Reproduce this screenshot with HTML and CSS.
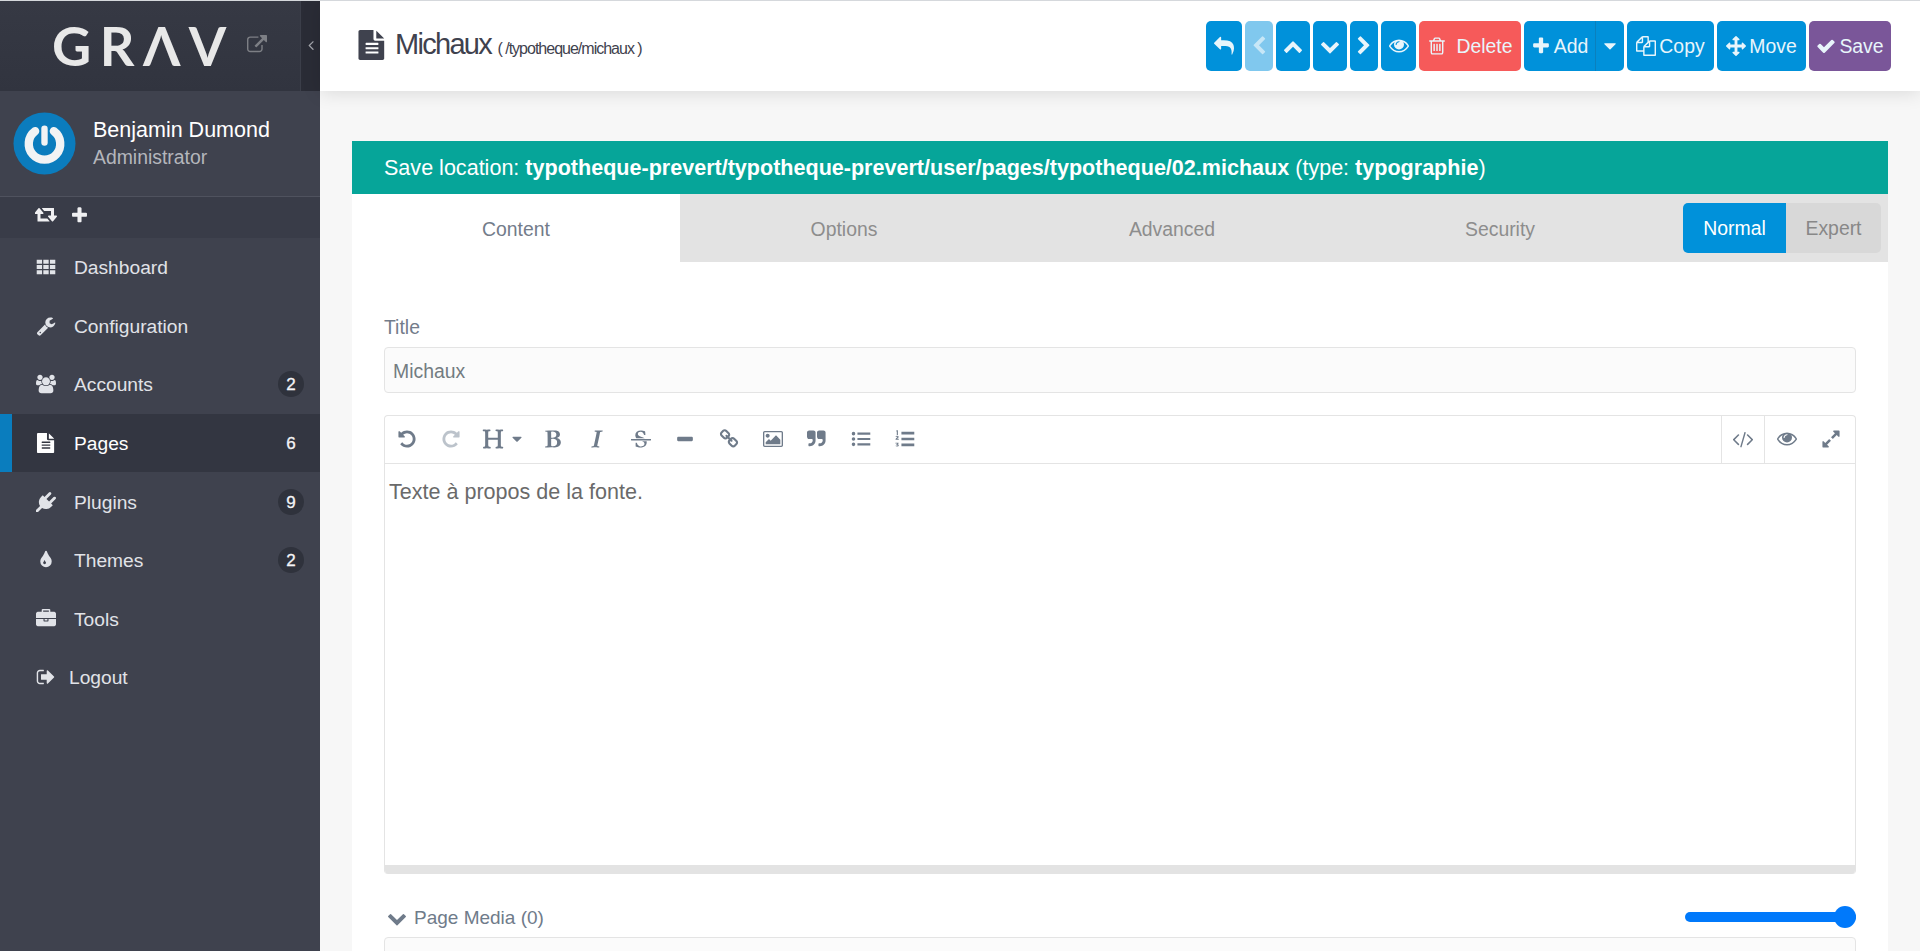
FILE: index.html
```html
<!DOCTYPE html>
<html lang="en">
<head>
    <meta charset="UTF-8">
    <title>Michaux | Grav</title>
    <link rel="stylesheet" href="styles.css">
</head>
<body>
    <!-- icon sprite -->
    <svg class="sprite" xmlns="http://www.w3.org/2000/svg">
        <symbol id="i-external" viewBox="0 0 1792 1792"><path d="M1408 928v320q0 119-84.5 203.5t-203.5 84.5h-832q-119 0-203.5-84.5t-84.5-203.5v-832q0-119 84.5-203.5t203.5-84.5h704q14 0 23 9t9 23v64q0 14-9 23t-23 9h-704q-66 0-113 47t-47 113v832q0 66 47 113t113 47h832q66 0 113-47t47-113v-320q0-14 9-23t23-9h64q14 0 23 9t9 23zm384-864v512q0 26-19 45t-45 19-45-19l-176-176-652 652q-10 10-23 10t-23-10l-114-114q-10-10-10-23t10-23l652-652-176-176q-19-19-19-45t19-45 45-19h512q26 0 45 19t19 45z"/></symbol>
        <symbol id="i-angle-left" viewBox="0 0 1792 1792"><path d="M1203 544q0 13-10 23l-393 393 393 393q10 10 10 23t-10 23l-50 50q-10 10-23 10t-23-10l-466-466q-10-10-10-23t10-23l466-466q10-10 23-10t23 10l50 50q10 10 10 23z"/></symbol>
        <symbol id="i-retweet" viewBox="0 0 1920 1792"><path d="M1152 1376q0 13-9.5 22.5t-22.5 9.5h-960q-8 0-13.5-2t-9-7-5.5-8-3-11.5-1-11.5v-600h-192q-26 0-45-19t-19-45q0-24 15-41l320-384q19-22 49-22t49 22l320 384q15 17 15 41 0 26-19 45t-45 19h-192v384h576q16 0 25 11l160 192q7 9 7 21zm640-416q0 24-15 41l-320 384q-20 23-49 23t-49-23l-320-384q-15-17-15-41 0-26 19-45t45-19h192v-384h-576q-16 0-25-12l-160-192q-7-9-7-20 0-13 9.5-22.5t22.5-9.5h960q8 0 13.5 2t9 7 5.5 8 3 11.5 1 11.5v600h192q26 0 45 19t19 45z" transform="translate(64 0)"/></symbol>
        <symbol id="i-plus" viewBox="0 0 1792 1792"><path d="M1600 736v192q0 40-28 68t-68 28h-416v416q0 40-28 68t-68 28h-192q-40 0-68-28t-28-68v-416h-416q-40 0-68-28t-28-68v-192q0-40 28-68t68-28h416v-416q0-40 28-68t68-28h192q40 0 68 28t28 68v416h416q40 0 68 28t28 68z"/></symbol>
        <symbol id="i-th" viewBox="0 0 1792 1792"><path d="M64 256h480v352h-480zM656 256h480v352h-480zM1248 256h480v352h-480zM64 720h480v352h-480zM656 720h480v352h-480zM1248 720h480v352h-480zM64 1184h480v352h-480zM656 1184h480v352h-480zM1248 1184h480v352h-480z"/></symbol>
        <symbol id="i-wrench" viewBox="0 0 1792 1792"><path d="M448 1472q0-26-19-45t-45-19-45 19-19 45 19 45 45 19 45-19 19-45zm644-420l-682 682q-37 37-90 37-52 0-91-37l-106-108q-38-36-38-90 0-53 38-91l681-681q39 98 114.5 173.5t173.5 114.5zm634-435q0 39-23 106-47 134-164.5 217.5t-258.5 83.5q-185 0-316.5-131.5t-131.5-316.5 131.5-316.5 316.5-131.5q58 0 121.5 16.5t107.5 46.5q16 11 16 28t-16 28l-293 169v224l193 107q5-3 79-48.5t135.5-81 70.5-35.5q15 0 23.5 10t8.5 25z"/></symbol>
        <symbol id="i-users" viewBox="0 0 1920 1792"><path d="M593 896q-162 5-265 128h-134q-82 0-138-40.5t-56-118.5q0-353 124-353 6 0 43.5 21t97.5 42.5 119 21.5q67 0 133-23-5 37-5 66 0 139 81 256zm1071 637q0 120-73 189.5t-194 69.5h-874q-121 0-194-69.5t-73-189.5q0-53 3.5-103.5t14-109 26.5-108.5 43-97.5 62-81 85.5-53.5 111.5-20q10 0 43 21.5t73 48 107 48 135 21.5 135-21.5 107-48 73-48 43-21.5q61 0 111.5 20t85.5 53.5 62 81 43 97.5 26.5 108.5 14 109 3.5 103.5zm-1024-1277q0 106-75 181t-181 75-181-75-75-181 75-181 181-75 181 75 75 181zm704 384q0 159-112.5 271.5t-271.5 112.5-271.5-112.5-112.5-271.5 112.5-271.5 271.5-112.5 271.5 112.5 112.5 271.5zm576 225q0 78-56 118.5t-138 40.5h-134q-103-123-265-128 81-117 81-256 0-29-5-66 66 23 133 23 59 0 119-21.5t97.5-42.5 43.5-21q124 0 124 353zm-128-609q0 106-75 181t-181 75-181-75-75-181 75-181 181-75 181 75 75 181z"/></symbol>
        <symbol id="i-file" viewBox="0 0 1792 1792"><path fill-rule="evenodd" d="M1596 476q14 14 28 36h-472v-472q22 14 36 28zm-476 164h504v1056q0 40-28 68t-68 28h-1344q-40 0-68-28t-28-68v-1600q0-40 28-68t68-28h800v544q0 40 28 68t68 28zm160 736v-64q0-14-9-23t-23-9h-704q-14 0-23 9t-9 23v64q0 14 9 23t23 9h704q14 0 23-9t9-23zm0-256v-64q0-14-9-23t-23-9h-704q-14 0-23 9t-9 23v64q0 14 9 23t23 9h704q14 0 23-9t9-23zm0-256v-64q0-14-9-23t-23-9h-704q-14 0-23 9t-9 23v64q0 14 9 23t23 9h704q14 0 23-9t9-23z"/></symbol>
        <symbol id="i-plug" viewBox="0 0 1792 1792"><path d="M1755 453q37 38 37 90.5t-37 90.5l-401 400 150 150-160 160q-163 163-389.5 186.5t-411.5-100.5l-362 362h-181v-181l362-362q-124-185-100.5-411.5t186.5-389.5l160-160 150 150 400-401q38-37 91-37t90 37 37 90.5-37 90.5l-400 401 234 234 401-400q38-37 91-37t90 37z"/></symbol>
        <symbol id="i-tint" viewBox="0 0 1792 1792"><path fill-rule="evenodd" d="M896 1152q0-36-20-69-1-1-15.5-22.5t-25.5-38-25-44-21-50.5q-4-16-21-16t-21 16q-7 23-21 50.5t-25 44-25.5 38-15.5 22.5q-20 33-20 69 0 53 37.5 90.5t90.5 37.5 90.5-37.5 37.5-90.5zm512-128q0 212-150 362t-362 150-362-150-150-362q0-145 81-275 6-9 62.5-90.5t101-151 99.5-178 83-201.5q9-30 34-47t51-17 51.5 17 33.5 47q28 93 83 201.5t99.5 178 101 151 62.5 90.5q81 127 81 275z"/></symbol>
        <symbol id="i-briefcase" viewBox="0 0 1792 1792"><path fill-rule="evenodd" d="M640 256h512v-128h-512v128zm1152 640v480q0 66-47 113t-113 47h-1472q-66 0-113-47t-47-113v-480h672v160q0 26 19 45t45 19h320q26 0 45-19t19-45v-160h672zm-768 0v128h-256v-128h256zm768-480v384h-1792v-384q0-66 47-113t113-47h352v-160q0-40 28-68t68-28h576q40 0 68 28t28 68v160h352q66 0 113 47t47 113z"/></symbol>
        <symbol id="i-signout" viewBox="0 0 1792 1792"><path d="M704 1440q0 4 1 20t.5 26.5-3 23.5-10 19.5-20.5 6.5h-320q-119 0-203.5-84.5t-84.5-203.5v-704q0-119 84.5-203.5t203.5-84.5h320q13 0 22.5 9.5t9.5 22.5q0 4 1 20t.5 26.5-3 23.5-10 19.5-20.5 6.5h-320q-66 0-113 47t-47 113v704q0 66 47 113t113 47h312l11.5 1 11.5 3 8 5.5 7 9 2 13.5zm928-544q0 26-19 45l-544 544q-19 19-45 19t-45-19-19-45v-288h-448q-26 0-45-19t-19-45v-384q0-26 19-45t45-19h448v-288q0-26 19-45t45-19 45 19l544 544q19 19 19 45z"/></symbol>
        <symbol id="i-reply" viewBox="0 0 1792 1792"><path d="M1792 1120q0 166-127 451-3 7-10.5 24t-13.5 30-13 22q-12 17-28 17-15 0-23.5-10t-8.5-25q0-9 2.5-26.5t2.5-23.5q5-68 5-123 0-101-17.5-181t-48.5-138.5-80-101-105.5-69.5-133-42.5-154-21.5-175.5-6h-224v256q0 26-19 45t-45 19-45-19l-512-512q-19-19-19-45t19-45l512-512q19-19 45-19t45 19 19 45v256h224q713 0 875 403 53 134 53 333z"/></symbol>
        <symbol id="i-chev-left" viewBox="0 0 1792 1792"><path d="M1427 301l-531 531 531 531q19 19 19 45t-19 45l-166 166q-19 19-45 19t-45-19l-742-742q-19-19-19-45t19-45l742-742q19-19 45-19t45 19l166 166q19 19 19 45t-19 45z"/></symbol>
        <symbol id="i-chev-right" viewBox="0 0 1792 1792"><path d="M1363 877l-742 742q-19 19-45 19t-45-19l-166-166q-19-19-19-45t19-45l531-531-531-531q-19-19-19-45t19-45l166-166q19-19 45-19t45 19l742 742q19 19 19 45t-19 45z"/></symbol>
        <symbol id="i-chev-up" viewBox="0 0 1792 1792"><path d="M1683 1331l-166 165q-19 19-45 19t-45-19l-531-531-531 531q-19 19-45 19t-45-19l-166-165q-19-19-19-45.5t19-45.5l742-741q19-19 45-19t45 19l742 741q19 19 19 45.5t-19 45.5z"/></symbol>
        <symbol id="i-chev-down" viewBox="0 0 1792 1792"><path d="M1683 808l-742 741q-19 19-45 19t-45-19l-742-741q-19-19-19-45.5t19-45.5l166-165q19-19 45-19t45 19l531 531 531-531q19-19 45-19t45 19l166 165q19 19 19 45.5t-19 45.5z"/></symbol>
        <symbol id="i-eye" viewBox="0 0 1792 1792"><path fill-rule="evenodd" d="M1664 960q-152-236-381-353 61 104 61 225 0 185-131.5 316.5t-316.5 131.5-316.5-131.5-131.5-316.5q0-121 61-225-229 117-381 353 133 205 333.5 326.5t434.5 121.5 434.5-121.5 333.5-326.5zm-720-384q0-20-14-34t-34-14q-125 0-214.5 89.5t-89.5 214.5q0 20 14 34t34 14 34-14 14-34q0-86 61-147t147-61q20 0 34-14t14-34zm848 384q0 34-20 69-140 230-376.5 368.5t-499.5 138.5-499.5-139-376.5-368q-20-35-20-69t20-69q140-229 376.5-368t499.5-139 499.5 139 376.5 368q20 35 20 69z" transform="translate(0 -64)"/></symbol>
        <symbol id="i-trash" viewBox="0 0 1792 1792"><path d="M704 736v576q0 14-9 23t-23 9h-64q-14 0-23-9t-9-23v-576q0-14 9-23t23-9h64q14 0 23 9t9 23zm256 0v576q0 14-9 23t-23 9h-64q-14 0-23-9t-9-23v-576q0-14 9-23t23-9h64q14 0 23 9t9 23zm256 0v576q0 14-9 23t-23 9h-64q-14 0-23-9t-9-23v-576q0-14 9-23t23-9h64q14 0 23 9t9 23zm128 724v-948h-896v948q0 22 7 40.5t14.5 27 10.5 8.5h832q3 0 10.5-8.5t14.5-27 7-40.5zm-672-1076h448l-48-117q-7-9-17-11h-317q-10 2-17 11zm928 32v64q0 14-9 23t-23 9h-96v948q0 83-47 143.5t-113 60.5h-832q-66 0-113-58.5t-47-141.5v-952h-96q-14 0-23-9t-9-23v-64q0-14 9-23t23-9h309l70-167q15-37 54-63t79-26h320q40 0 79 26t54 63l70 167h309q14 0 23 9t9 23z"/></symbol>
        <symbol id="i-caret" viewBox="0 0 1792 1792"><path d="M1408 704q0 26-19 45l-448 448q-19 19-45 19t-45-19l-448-448q-19-19-19-45t19-45 45-19h896q26 0 45 19t19 45z"/></symbol>
        <symbol id="i-files" viewBox="0 0 1792 1792"><path d="M1696 384q40 0 68 28t28 68v1216q0 40-28 68t-68 28h-960q-40 0-68-28t-28-68v-288h-544q-40 0-68-28t-28-68v-672q0-40 20-88t48-76l408-408q28-28 76-48t88-20h416q40 0 68 28t28 68v328q68-40 128-40h416zm-544 213l-299 299h299v-299zm-640-384l-299 299h299v-299zm196 647l316-316v-416h-384v416q0 40-28 68t-68 28h-416v640h512v-256q0-40 20-88t48-76zm956 804v-1152h-384v416q0 40-28 68t-68 28h-416v640h896z"/></symbol>
        <symbol id="i-arrows" viewBox="0 0 1792 1792"><path d="M1792 896q0 26-19 45l-256 256q-19 19-45 19t-45-19-19-45v-128h-384v384h128q26 0 45 19t19 45-19 45l-256 256q-19 19-45 19t-45-19l-256-256q-19-19-19-45t19-45 45-19h128v-384h-384v128q0 26-19 45t-45 19-45-19l-256-256q-19-19-19-45t19-45l256-256q19-19 45-19t45 19 19 45v128h384v-384h-128q-26 0-45-19t-19-45 19-45l256-256q19-19 45-19t45 19l256 256q19 19 19 45t-19 45-45 19h-128v384h384v-128q0-26 19-45t45-19 45 19l256 256q19 19 19 45z"/></symbol>
        <symbol id="i-check" viewBox="0 0 1792 1792"><path d="M1671 566q0 40-28 68l-724 724-136 136q-28 28-68 28t-68-28l-136-136-362-362q-28-28-28-68t28-68l136-136q28-28 68-28t68 28l294 295 656-657q28-28 68-28t68 28l136 136q28 28 28 68z"/></symbol>
        <symbol id="i-undo" viewBox="0 0 1792 1792"><path d="M1664 896q0 156-61 298t-164 245-245 164-298 61q-172 0-327-72.5t-264-204.5q-7-10-6.5-22.5t8.5-20.5l137-138q10-9 25-9 16 2 23 12 73 95 179 147t225 52q104 0 198.5-40.5t163.5-109.5 109.5-163.5 40.5-198.5-40.5-198.5-109.5-163.5-163.5-109.5-198.5-40.5q-98 0-188 35.5t-160 101.5l137 138q31 30 14 69-17 40-59 40h-448q-26 0-45-19t-19-45v-448q0-42 40-59 39-17 69 14l130 129q107-101 244.5-156.5t284.5-55.5q156 0 298 61t245 164 164 245 61 298z"/></symbol>
        <symbol id="i-repeat" viewBox="0 0 1792 1792"><path d="M1664 256v448q0 26-19 45t-45 19h-448q-42 0-59-40-17-39 14-69l138-138q-148-137-349-137-104 0-198.5 40.5t-163.5 109.5-109.5 163.5-40.5 198.5 40.5 198.5 109.5 163.5 163.5 109.5 198.5 40.5q119 0 225-52t179-147q7-10 23-12 15 0 25 9l137 138q9 8 9.5 20.5t-7.5 22.5q-109 132-264 204.5t-327 72.5q-156 0-298-61t-245-164-164-245-61-298 61-298 164-245 245-164 298-61q147 0 284.5 55.5t244.5 156.5l130-129q29-31 70-14 39 17 39 59z"/></symbol>
        <symbol id="i-header" viewBox="0 0 1792 1792"><path d="M1682 1664q-44 0-132.5-3.5t-133.5-3.5q-44 0-132 3.5t-132 3.5q-24 0-37-20.5t-13-45.5q0-31 17-46t39-17 51-7 45-15q33-21 33-140l-1-391q0-21-1-31-13-4-50-4h-675q-38 0-51 4-1 10-1 31l-1 371q0 142 37 164 16 10 48 13t57 3.5 45 15 20 45.5q0 26-12.5 48t-36.5 22q-47 0-139.5-3.5t-138.5-3.5q-43 0-128 3.5t-127 3.5q-23 0-35.5-21t-12.5-45q0-30 15.5-45t36-17.5 47.5-7.5 42-15q33-23 33-143l-1-57v-813q0-3 .5-26t0-36.5-1.5-38.5-3.5-42-6.5-36.5-11-31.5-16-18q-15-10-45-12t-53-2-41-14-18-45q0-26 12-48t36-22q46 0 138.5 3.5t138.5 3.5q42 0 126.5-3.5t126.5-3.5q25 0 37.5 22t12.5 48q0 30-17 43.5t-38.5 14.5-49.5 4-43 13q-35 21-35 160l1 320q0 21 1 32 13 3 39 3h699q25 0 38-3 1-11 1-32l1-320q0-139-35-160-18-11-58.5-12.5t-66-13-25.5-49.5q0-26 12.5-48t37.5-22q44 0 132 3.5t132 3.5q43 0 129-3.5t129-3.5q25 0 37.5 22t12.5 48q0 30-17.5 44t-40 14.5-51.5 3-44 12.5q-35 23-35 161l1 943q0 119 34 140 16 10 46 13.5t53.5 4.5 41.5 15.5 18 44.5q0 26-12 48t-36 22z"/></symbol>
        <symbol id="i-bold" viewBox="0 0 1792 1792"><path fill-rule="evenodd" d="M747 1521q74 32 140 32 376 0 376-335 0-114-41-180-27-44-61.5-74t-67.5-46.5-80.5-25-84-10.5-94.5-2q-73 0-101 10 0 53-.5 159t-.5 158q0 8-1 67.5t-.5 96.5 4.5 83.5 12 66.5zm-14-746q42 7 109 7 82 0 143-13t110-44.5 74.5-89.5 25.5-142q0-70-29-122.5t-79-82-108-43.5-124-14q-50 0-130 13 0 50 4 151t4 152q0 27-.5 80t-.5 79q0 46 1 69zm-541 889l2-94q15-4 85-16t106-27q7-12 12.5-27t8.5-33.5 5.5-32.5 3-37.5.5-34v-35.5-30q0-982-22-1025-4-8-22-14.5t-44.5-11-49.5-7-48.5-4.5-30.5-3l-4-83q98-2 340-11.5t373-9.5q23 0 68 .5t68 .5q70 0 136.5 13t128.5 42 108 71 74 104.5 28 137.5q0 52-16.5 95.5t-39 72-64.5 57.5-73 45-84 40q154 35 256.5 134t102.5 248q0 100-35 179.5t-93.5 130.5-138 85.5-163.5 48.5-176 14q-44 0-132-3t-132-3q-106 0-307 11t-231 12z"/></symbol>
        <symbol id="i-italic" viewBox="0 0 1792 1792"><path d="M384 1662l17-85q6-2 81.5-21.5t111.5-37.5q28-35 41-101 1-7 62-289t114-543.5 52-296.5v-25q-24-13-54.5-18.5t-69.5-8-58-5.5l19-103q33 2 120 6.5t149.5 7 120.5 2.5q48 0 98.5-2.5t121-7 98.5-6.5q-5 39-19 89-30 10-101.5 28.5t-108.5 33.5q-8 19-14 42.5t-9 40-7.5 45.5-6.5 42q-27 148-87.5 419.5t-77.5 355.5q-2 9-13 58t-20 90-16 83.5-6 57.5l1 18q17 4 185 31-3 44-16 99-11 0-32.5 1.5t-32.5 1.5q-29 0-87-10t-86-10q-138-2-206-2-51 0-143 9t-121 11z"/></symbol>
        <symbol id="i-strike" viewBox="0 0 1792 1792"><path d="M1760 896q14 0 23 9t9 23v64q0 14-9 23t-23 9h-1728q-14 0-23-9t-9-23v-64q0-14 9-23t23-9h1728zm-1277-64q-28-35-51-80-48-98-48-188 0-181 134-309 133-127 393-127 50 0 167 19 66 12 177 48 10 38 21 118 14 123 14 183 0 18-5 45l-12 3-84-6-14-2q-50-149-103-205-88-91-210-91-114 0-182 59-67 58-67 146 0 73 66 140t279 129q69 20 173 66 58 28 95 52h-743zm507 256h411q7 39 7 92 0 111-41 212-23 56-71 104-37 35-109 81-80 48-153 66-80 21-203 21-114 0-195-23l-140-40q-57-16-72-28-8-8-8-22v-13q0-108-2-156-1-30 0-68l2-37v-44l102-2q15 34 30 71t22.5 56 12.5 27q35 57 80 94 43 36 105 57 59 22 132 22 64 0 139-27 77-26 122-86 47-61 47-129 0-84-81-157-34-29-137-71z"/></symbol>
        <symbol id="i-minus" viewBox="0 0 1792 1792"><path d="M288 704h1216q96 0 96 96v192q0 96-96 96h-1216q-96 0-96-96v-192q0-96 96-96z"/></symbol>
        <symbol id="i-link" viewBox="0 0 1792 1792"><path fill-rule="evenodd" d="M1520 1216q0-40-28-68l-208-208q-28-28-68-28-42 0-72 32 3 3 19 18.5t21.5 21.5 15 19 13 25.5 3.5 27.5q0 40-28 68t-68 28q-15 0-27.5-3.5t-25.5-13-19-15-21.5-21.5-18.5-19q-33 31-33 73 0 40 28 68l206 207q27 27 68 27 40 0 68-26l147-146q28-28 28-67zm-703-705q0-40-28-68l-206-207q-28-28-68-28-39 0-68 27l-147 146q-28 28-28 67 0 40 28 68l208 208q27 27 68 27 42 0 72-31-3-3-19-18.5t-21.5-21.5-15-19-13-25.5-3.5-27.5q0-40 28-68t68-28q15 0 27.5 3.5t25.5 13 19 15 21.5 21.5 18.5 19q33-31 33-73zm895 705q0 120-85 203l-147 146q-83 83-203 83-121 0-204-85l-206-207q-83-83-83-203 0-123 88-209l-88-88q-86 88-208 88-120 0-204-84l-208-208q-84-84-84-204t85-203l147-146q83-83 203-83 121 0 204 85l206 207q83 83 83 203 0 123-88 209l88 88q86-88 208-88 120 0 204 84l208 208q84 84 84 204z"/></symbol>
        <symbol id="i-image" viewBox="0 0 1920 1792"><path fill-rule="evenodd" d="M576 576q0 80-56 136t-136 56-136-56-56-136 56-136 136-56 136 56 56 136zm1024 384v448h-1408v-192l320-320 160 160 512-512zm96-704h-1600q-13 0-22.5 9.5t-9.5 22.5v1216q0 13 9.5 22.5t22.5 9.5h1600q13 0 22.5-9.5t9.5-22.5v-1216q0-13-9.5-22.5t-22.5-9.5zm160 32v1216q0 66-47 113t-113 47h-1600q-66 0-113-47t-47-113v-1216q0-66 47-113t113-47h1600q66 0 113 47t47 113z" transform="translate(64 0)"/></symbol>
        <symbol id="i-quote" viewBox="0 0 1792 1792"><path d="M768 320v704q0 104-40.5 198.5t-109.5 163.5-163.5 109.5-198.5 40.5h-64q-26 0-45-19t-19-45v-128q0-26 19-45t45-19h64q106 0 181-75t75-181v-32q0-40-28-68t-68-28h-224q-80 0-136-56t-56-136v-384q0-80 56-136t136-56h384q80 0 136 56t56 136zm896 0v704q0 104-40.5 198.5t-109.5 163.5-163.5 109.5-198.5 40.5h-64q-26 0-45-19t-19-45v-128q0-26 19-45t45-19h64q106 0 181-75t75-181v-32q0-40-28-68t-68-28h-224q-80 0-136-56t-56-136v-384q0-80 56-136t136-56h384q80 0 136 56t56 136z"/></symbol>
        <symbol id="i-list-ul" viewBox="0 0 1792 1792"><path d="M64 416a160 160 0 1 0 320 0a160 160 0 1 0-320 0zM64 896a160 160 0 1 0 320 0a160 160 0 1 0-320 0zM64 1376a160 160 0 1 0 320 0a160 160 0 1 0-320 0zM576 320h1152v192h-1152zM576 800h1152v192h-1152zM576 1280h1152v192h-1152z"/></symbol>
        <symbol id="i-list-ol" viewBox="0 0 1792 1792"><path d="M576 256h1152v240h-1152zM576 776h1152v240h-1152zM576 1296h1152v240h-1152zM130 120h130v420h-100v-320h-40zM40 690q20-80 150-80 140 0 140 100 0 70-140 170h150v80h-300q0-100 150-210 40-30 30-50-10-20-80-10-10 20-100 0zM40 1230h280v70l-100 70q120 10 120 100 0 100-150 100-130 0-150-70l90-30q10 20 60 20 50 0 50-30 0-30-110-30v-70l80-50h-170z"/></symbol>
        <symbol id="i-code" viewBox="0 0 1792 1792"><path d="M553 1399l-50 50q-10 10-23 10t-23-10l-466-466q-10-10-10-23t10-23l466-466q10-10 23-10t23 10l50 50q10 10 10 23t-10 23l-393 393 393 393q10 10 10 23t-10 23zm591-1067l-373 1291q-4 13-15.5 19.5t-23.5 2.5l-62-17q-13-4-19.5-15.5t-2.5-24.5l373-1291q4-13 15.5-19.5t23.5-2.5l62 17q13 4 19.5 15.5t2.5 24.5zm657 651l-466 466q-10 10-23 10t-23-10l-50-50q-10-10-10-23t10-23l393-393-393-393q-10-10-10-23t10-23l50-50q10-10 23-10t23 10l466 466q10 10 10 23t-10 23z"/></symbol>
        <symbol id="i-expand" viewBox="0 0 1792 1792"><path d="M883 1056q0 13-10 23l-332 332 144 144q19 19 19 45t-19 45-45 19h-448q-26 0-45-19t-19-45v-448q0-26 19-45t45-19 45 19l144 144 332-332q10-10 23-10t23 10l114 114q10 10 10 23zm781-864v448q0 26-19 45t-45 19-45-19l-144-144-332 332q-10 10-23 10t-23-10l-114-114q-10-10-10-23t10-23l332-332-144-144q-19-19-19-45t19-45 45-19h448q26 0 45 19t19 45z"/></symbol>
    </svg>

    <div class="app">
        <aside class="sidebar">
            <div class="logo-bar">
                <a class="logo" aria-label="Grav">GRΛV</a>
                <svg class="icon logo-link"><use href="#i-external"/></svg>
                <div class="collapse-strip"><svg class="icon"><use href="#i-angle-left"/></svg></div>
            </div>

            <div class="user-block">
                <svg class="avatar" viewBox="0 0 64 64">
                    <circle cx="32" cy="32" r="31.5" fill="#0b7cbd"/>
                    <path d="M22.5 19.5a16 16 0 1 0 19 0" fill="none" stroke="#f2f3f4" stroke-width="8.5" stroke-linecap="round"/>
                    <path d="M32 17v14" fill="none" stroke="#f2f3f4" stroke-width="6.5" stroke-linecap="round"/>
                </svg>
                <div class="user-info">
                    <div class="user-name">Benjamin Dumond</div>
                    <div class="user-role">Administrator</div>
                </div>
            </div>

            <div class="switch-strip">
                <svg class="icon strip-retweet"><use href="#i-retweet"/></svg>
                <svg class="icon strip-plus"><use href="#i-plus"/></svg>
            </div>

            <ul class="nav">
                <li class="nav-item"><svg class="icon"><use href="#i-th"/></svg><span class="nav-label">Dashboard</span></li>
                <li class="nav-item"><svg class="icon"><use href="#i-wrench"/></svg><span class="nav-label">Configuration</span></li>
                <li class="nav-item"><svg class="icon"><use href="#i-users"/></svg><span class="nav-label">Accounts</span><span class="badge">2</span></li>
                <li class="nav-item active"><svg class="icon"><use href="#i-file"/></svg><span class="nav-label">Pages</span><span class="badge">6</span></li>
                <li class="nav-item"><svg class="icon"><use href="#i-plug"/></svg><span class="nav-label">Plugins</span><span class="badge">9</span></li>
                <li class="nav-item"><svg class="icon"><use href="#i-tint"/></svg><span class="nav-label">Themes</span><span class="badge">2</span></li>
                <li class="nav-item"><svg class="icon"><use href="#i-briefcase"/></svg><span class="nav-label">Tools</span></li>
                <li class="nav-item logout"><svg class="icon"><use href="#i-signout"/></svg><span class="nav-label">Logout</span></li>
            </ul>
        </aside>

        <main class="main">
            <header class="titlebar">
                <svg class="icon title-icon"><use href="#i-file"/></svg>
                <h1 class="page-title">Michaux <small class="page-route">( /typotheque/michaux )</small></h1>
                <div class="actions">
                    <a class="btn w-36"><svg class="icon"><use href="#i-reply"/></svg></a>
                    <a class="btn w-28 disabled"><svg class="icon"><use href="#i-chev-left"/></svg></a>
                    <a class="btn w-34"><svg class="icon"><use href="#i-chev-up"/></svg></a>
                    <a class="btn w-34"><svg class="icon"><use href="#i-chev-down"/></svg></a>
                    <a class="btn w-28"><svg class="icon"><use href="#i-chev-right"/></svg></a>
                    <a class="btn w-35"><svg class="icon"><use href="#i-eye"/></svg></a>
                    <a class="btn btn-text delete w-102"><svg class="icon"><use href="#i-trash"/></svg><span class="delete-label">Delete</span></a>
                    <div class="btn-group">
                        <a class="btn btn-text w-72"><svg class="icon"><use href="#i-plus"/></svg>Add</a>
                        <a class="btn dropdown w-28"><svg class="icon"><use href="#i-caret"/></svg></a>
                    </div>
                    <a class="btn btn-text w-87"><svg class="icon"><use href="#i-files"/></svg>Copy</a>
                    <a class="btn btn-text w-89"><svg class="icon"><use href="#i-arrows"/></svg>Move</a>
                    <a class="btn btn-text save w-82"><svg class="icon"><use href="#i-check"/></svg>Save</a>
                </div>
            </header>

            <section class="content">
                <div class="card">
                    <div class="save-location">Save location: <b>typotheque-prevert/typotheque-prevert/user/pages/typotheque/02.michaux</b> (type: <b>typographie</b>)</div>

                    <div class="tabs">
                        <div class="tab active">Content</div>
                        <div class="tab">Options</div>
                        <div class="tab">Advanced</div>
                        <div class="tab">Security</div>
                        <div class="mode-switch">
                            <span class="mode on">Normal</span>
                            <span class="mode">Expert</span>
                        </div>
                    </div>

                    <div class="form">
                        <label class="field-label">Title</label>
                        <div class="text-input">Michaux</div>

                        <div class="editor">
                            <div class="editor-toolbar">
                                <div class="tool-group">
                                    <span class="tool"><svg class="icon"><use href="#i-undo"/></svg></span>
                                    <span class="tool muted"><svg class="icon"><use href="#i-repeat"/></svg></span>
                                    <span class="tool tool-heading"><svg class="icon tool-h"><use href="#i-header"/></svg><svg class="icon tool-caret"><use href="#i-caret"/></svg></span>
                                    <span class="tool"><svg class="icon"><use href="#i-bold"/></svg></span>
                                    <span class="tool"><svg class="icon"><use href="#i-italic"/></svg></span>
                                    <span class="tool"><svg class="icon"><use href="#i-strike"/></svg></span>
                                    <span class="tool"><svg class="icon"><use href="#i-minus"/></svg></span>
                                    <span class="tool"><svg class="icon"><use href="#i-link"/></svg></span>
                                    <span class="tool"><svg class="icon"><use href="#i-image"/></svg></span>
                                    <span class="tool"><svg class="icon"><use href="#i-quote"/></svg></span>
                                    <span class="tool"><svg class="icon"><use href="#i-list-ul"/></svg></span>
                                    <span class="tool"><svg class="icon"><use href="#i-list-ol"/></svg></span>
                                </div>
                                <div class="tool-group right">
                                    <span class="tool mode-tool"><svg class="icon"><use href="#i-code"/></svg></span>
                                    <span class="tool"><svg class="icon"><use href="#i-eye"/></svg></span>
                                    <span class="tool"><svg class="icon"><use href="#i-expand"/></svg></span>
                                </div>
                            </div>
                            <div class="editor-body">Texte à propos de la fonte.</div>
                            <div class="editor-resize"></div>
                        </div>

                        <div class="media-head">
                            <svg class="icon"><use href="#i-chev-down"/></svg>
                            <span class="media-title">Page Media (0)</span>
                            <div class="slider"><span class="slider-thumb"></span></div>
                        </div>
                        <div class="media-box"></div>
                    </div>
                </div>
            </section>
        </main>
    </div>
</body>
</html>
```

FILE: styles.css
```css
* {
    box-sizing: border-box;
}
html, body {
    height: 100%;
}
body {
    margin: 0;
    overflow: hidden;
    background: #f7f7f7;
    border-top: 1px solid #d5d8dc;
    font-family: "Liberation Sans", Arial, sans-serif;
    color: #737c81;
}
.sprite {
    display: none;
}
.icon {
    width: 18px;
    height: 18px;
    fill: currentColor;
    flex: none;
}
.app {
    display: flex;
    height: 950px;
    overflow: hidden;
}

/* sidebar */
.sidebar {
    width: 320px;
    flex: none;
    background: #3f424e;
    color: #e1e3e8;
    overflow: hidden;
}
.logo-bar {
    display: flex;
    align-items: center;
    height: 90px;
    padding-left: 52px;
    background: linear-gradient(#363944, #31343f);
}
.logo {
    font-family: "Lato", sans-serif;
    font-size: 54px;
    font-weight: 700;
    line-height: 90px;
    letter-spacing: 8.5px;
    color: #e8e8e8;
}
.logo-link {
    width: 20px;
    height: 20px;
    margin: -3px 0 0 12px;
    color: #7d7f85;
}
.collapse-strip {
    display: flex;
    align-items: center;
    justify-content: center;
    width: 20px;
    height: 90px;
    margin-left: auto;
    background: #2a2c36;
    border-left: 1px solid #3b3e49;
    color: #a5a7ad;
}
.collapse-strip .icon {
    width: 16px;
    height: 16px;
    margin-top: -2px;
}
.user-block {
    display: flex;
    align-items: center;
    height: 106px;
    padding: 0 0 0 13px;
    border-bottom: 1px solid #4f525e;
}
.avatar {
    width: 63px;
    height: 63px;
    flex: none;
    margin-top: -1px;
}
.user-info {
    margin: 0 0 0 17px;
}
.user-name {
    font-size: 21.5px;
    line-height: 27px;
    color: #fff;
}
.user-role {
    font-size: 19.4px;
    line-height: 27px;
    color: #b4b6bc;
}
.switch-strip {
    display: flex;
    align-items: center;
    height: 41px;
    padding: 0 0 5px 35px;
    background: #393c48;
    color: #f0f0f2;
}
.strip-retweet {
    width: 23px;
    height: 21px;
    margin-right: 12px;
}
.strip-plus {
    width: 19px;
    height: 19px;
}
.nav {
    list-style: none;
    margin: 0;
    padding: 0;
}
.nav-item {
    display: flex;
    align-items: center;
    height: 58.6px;
    padding: 0 16px 0 36px;
    font-size: 19.2px;
}
.nav-item .icon {
    width: 20px;
    height: 20px;
}
.nav-label {
    margin-left: 18px;
    padding-top: 2px;
}
.nav-item.active {
    background: #333641;
    border-left: 12px solid #0a7dbe;
    padding-left: 24px;
    color: #fff;
}
.nav-item.logout .nav-label {
    margin-left: 13px;
}
.badge {
    width: 26px;
    height: 26px;
    margin-left: auto;
    border-radius: 50%;
    background: #2f323c;
    color: #f4f4f6;
    font-size: 17px;
    line-height: 27px;
    text-align: center;
    -webkit-text-stroke: 0.3px #f4f4f6;
}
.active .badge {
    background: none;
}

/* title bar */
.main {
    flex: 1;
    min-width: 0;
}
.titlebar {
    position: relative;
    display: flex;
    align-items: center;
    height: 90px;
    padding: 0 29px 0 37px;
    background: #fff;
    box-shadow: 0 2px 18px rgba(0,0,0,0.12);
}
.title-icon {
    width: 30px;
    height: 30px;
    margin: -2px 0 0 0;
    color: #3f424e;
}
.page-title {
    margin: -3px 0 0 8px;
    font-size: 29px;
    font-weight: 400;
    letter-spacing: -1.7px;
    color: #3f424e;
}
.page-route {
    font-size: 16px;
    letter-spacing: -1px;
}
.actions {
    display: flex;
    gap: 3px;
    margin-left: auto;
}
.btn-group {
    display: flex;
}
.btn {
    display: flex;
    align-items: center;
    justify-content: center;
    height: 50px;
    background: #0091da;
    border-radius: 5px;
    color: #e8f5fb;
    font-size: 19.4px;
}
.btn .icon {
    width: 20px;
    height: 20px;
}
.btn-text .icon {
    margin-right: 3px;
}
.delete {
    background: #f65a5a;
}
.delete-label {
    margin-left: 6px;
}
.save {
    background: #7a5699;
}
.disabled {
    background: #80c8ee;
    color: #c7e7f7;
}
.btn-group .btn:first-child {
    border-radius: 5px 0 0 5px;
    border-right: 1px solid #0a80bd;
}
.dropdown {
    border-radius: 0 5px 5px 0;
}
.w-28 { width: 28px; }
.w-34 { width: 34px; }
.w-35 { width: 35px; }
.w-36 { width: 36px; }
.w-72 { width: 72px; }
.w-82 { width: 82px; }
.w-87 { width: 87px; }
.w-89 { width: 89px; }
.w-102 { width: 102px; }

/* page card */
.content {
    padding: 50px 32px 0;
}
.card {
    background: #fff;
}
.save-location {
    height: 53px;
    padding: 0 32px;
    background: #06a599;
    color: #fff;
    font-size: 21.55px;
    line-height: 53px;
    white-space: nowrap;
}
.tabs {
    display: flex;
    align-items: center;
    height: 68px;
    background: #e3e3e3;
}
.tab {
    display: flex;
    align-items: center;
    justify-content: center;
    width: 328px;
    height: 100%;
    padding-top: 2px;
    font-size: 19.4px;
    color: #8d8d8d;
}
.tab.active {
    background: #fff;
    color: #737c8a;
}
.mode-switch {
    display: flex;
    height: 50px;
    margin: 0 7px 0 auto;
    border-radius: 5px;
    overflow: hidden;
    font-size: 19.4px;
    line-height: 51px;
}
.mode {
    width: 95px;
    background: #d8d8d8;
    color: #888;
    text-align: center;
}
.mode.on {
    width: 103px;
    background: #0091da;
    color: #fff;
}
.form {
    padding: 0 32px;
}
.field-label {
    display: block;
    padding-top: 54px;
    font-size: 19.4px;
    line-height: 22px;
    color: #737c8a;
}
.text-input {
    height: 46px;
    margin-top: 9px;
    padding-left: 8px;
    background: #fbfbfb;
    border: 1px solid #e4e4e4;
    border-radius: 4px;
    font-size: 19.4px;
    line-height: 46px;
    color: #737c81;
}
.editor {
    margin-top: 22px;
    border: 1px solid #e4e4e4;
    border-bottom: 0;
    border-radius: 4px;
    overflow: hidden;
}
.editor-toolbar {
    display: flex;
    justify-content: space-between;
    height: 48px;
    border-bottom: 1px solid #e4e4e4;
    color: #6f7b8a;
}
.tool-group {
    display: flex;
}
.tool {
    display: flex;
    align-items: center;
    justify-content: center;
    width: 44px;
    height: 100%;
    padding-bottom: 2px;
}
.tool .icon {
    width: 20px;
    height: 20px;
}
.tool.muted {
    color: #bcc3cb;
}
.tool-heading {
    justify-content: flex-start;
    gap: 5px;
    width: 58px;
    padding-left: 9px;
}
.tool .tool-h {
    width: 22px;
    height: 22px;
}
.tool .tool-caret {
    width: 16px;
    height: 16px;
}
.right {
    padding-right: 2px;
}
.mode-tool {
    border-left: 1px solid #e4e4e4;
    border-right: 1px solid #e4e4e4;
}
.editor-body {
    height: 401px;
    padding: 15px 4px;
    font-size: 21.55px;
    line-height: 26px;
    color: #6a6a6a;
}
.editor-resize {
    height: 9px;
    background: #e3e3e3;
}
.media-head {
    display: flex;
    align-items: center;
    height: 63px;
    padding-top: 24px;
    color: #6f7b8a;
}
.media-head > .icon {
    width: 20px;
    height: 20px;
    margin-left: 3px;
}
.media-title {
    margin-left: 7px;
    font-size: 19px;
}
.slider {
    display: flex;
    align-items: center;
    justify-content: flex-end;
    width: 171px;
    height: 10px;
    margin: -2px 0 0 auto;
    background: #0079fb;
    border-radius: 5px;
}
.slider-thumb {
    flex: none;
    width: 22px;
    height: 22px;
    border-radius: 50%;
    background: #0079fb;
}
.media-box {
    height: 100px;
    background: #fbfbfb;
    border: 1px solid #e4e4e4;
    border-radius: 4px;
}
```
